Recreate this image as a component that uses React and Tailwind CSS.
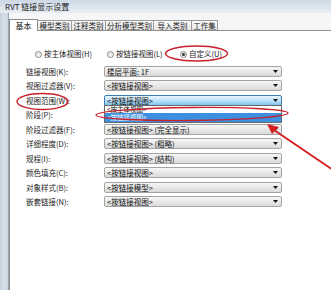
import React from "react";

const FONT = { fontFamily: '"Noto Sans CJK SC", "Liberation Sans", sans-serif' };

function Arrow() {
  return (
    <svg width="5" height="3" viewBox="0 0 5 3" className="block">
      <path d="M0 0H5L2.5 3Z" fill="#111" />
    </svg>
  );
}

function Select({ text, focused }) {
  return (
    <div
      className={
        focused
          ? "flex h-[11px] w-[178px] items-center rounded-[2px] border border-[#3c7fb1] bg-gradient-to-b from-[#eaf6fd] via-[#bfe3f8] to-[#7cc4ee] pl-[2px] text-[7.5px] leading-none text-[#111]"
          : "flex h-[11px] w-[178px] items-center rounded-[2px] border border-[#a4a4a4] bg-gradient-to-b from-[#f7f7f7] to-[#dadada] pl-[2px] text-[7.5px] leading-none text-[#111]"
      }
    >
      <span className="whitespace-nowrap">{text}</span>
      <span className="ml-auto mr-[3px]">
        <Arrow />
      </span>
    </div>
  );
}

function Row({ label, value, focused, hidden }) {
  return (
    <div className="flex h-[14.5px] items-center">
      <div className="w-[78px] whitespace-nowrap text-[7.5px] leading-none text-[#222]">{label}</div>
      {hidden ? <div className="h-[11px] w-[178px]" /> : <Select text={value} focused={focused} />}
    </div>
  );
}

function Radio({ checked }) {
  return (
    <span className="flex h-[7px] w-[7px] items-center justify-center rounded-full border border-[#8a8a8a] bg-gradient-to-b from-[#e6e6e6] to-[#fafafa]">
      {checked && <span className="h-[3px] w-[3px] rounded-full bg-[#333]" />}
    </span>
  );
}

const tabs = [
  { t: "模型类别", w: "w-[34px]" },
  { t: "注释类别", w: "w-[34px]" },
  { t: "分析模型类别", w: "w-[48px]" },
  { t: "导入类别", w: "w-[38px]" },
  { t: "工作集", w: "w-[26px]" },
];

export default function App() {
  return (
    <div className="relative h-[290px] w-[331px] overflow-hidden bg-white" style={FONT}>
      {/* title bar */}
      <div className="flex h-[13px] items-center bg-gradient-to-b from-[#cdd9e6] to-[#e8edf2] pl-[5px] text-[8px] leading-none text-[#1a1a1a]">
        RVT 链接显示设置
      </div>
      <div className="flex h-[277px]">
        {/* left window frame */}
        <div className="w-[9px] border-r border-[#9aa6b2] bg-gradient-to-r from-[#c3cfdb] via-[#d8e1ea] to-[#c9d4df]" />
        <div className="flex flex-1 flex-col bg-white">
          <div className="h-[5px] bg-[#f4f6f8]" />
          {/* tabs */}
          <div className="flex h-[12px] items-end bg-[#f4f6f8]">
            <div className="relative z-10 -mb-px flex h-[12px] w-[29px] items-center justify-center border border-b-0 border-[#8c8c8c] bg-white text-[8px] leading-none text-[#111]">
              基本
            </div>
            {tabs.map((tb) => (
              <div
                key={tb.t}
                className={`flex h-[10px] ${tb.w} items-center justify-center border border-l-0 border-b-0 border-[#9a9a9a] bg-gradient-to-b from-[#fbfbfb] to-[#e6e6e6] text-[7.5px] leading-none text-[#222] whitespace-nowrap`}
              >
                {tb.t}
              </div>
            ))}
          </div>
          {/* panel */}
          <div className="flex flex-1 flex-col border-l border-t border-[#8c8c8c] bg-white">
            {/* radios */}
            <div className="mt-[18px] flex h-[10px] items-center text-[7.5px] leading-none text-[#222]">
              <div className="ml-[25px] flex w-[72px] items-center gap-[2px]">
                <Radio />
                <span className="whitespace-nowrap">按主体视图(H)</span>
              </div>
              <div className="flex w-[73px] items-center gap-[2px]">
                <Radio />
                <span className="whitespace-nowrap">按链接视图(L)</span>
              </div>
              <div className="flex items-center gap-[2px]">
                <Radio checked />
                <span className="whitespace-nowrap">自定义(U)</span>
              </div>
            </div>
            {/* rows */}
            <div className="mt-[5px] flex flex-col pl-[16px]">
              <Row label="链接视图(K):" value="楼层平面: 1F" />
              <Row label="视图过滤器(V):" value="<按链接视图>" />
              <Row label="视图范围(W):" value="<按链接视图>" focused />
              <Row label="阶段(P):" hidden />
              <Row label="阶段过滤器(F):" value="<按链接视图>  (完全显示)" />
              <Row label="详细程度(D):" value="<按链接视图>  (粗略)" />
              <Row label="规程(I):" value="<按链接视图>  (结构)" />
              <Row label="颜色填充(C):" value="<按链接视图>" />
              <Row label="对象样式(B):" value="<按链接模型>" />
              <Row label="嵌套链接(N):" value="<按链接视图>" />
            </div>
          </div>
        </div>
      </div>

      {/* open dropdown list */}
      <div className="absolute left-[104px] top-[105px] z-20 flex w-[178px] flex-col border border-[#6a6a6a] bg-white text-[6.5px] text-[#111]">
        <div className="flex h-[7px] items-center pl-[2px] leading-none">&lt;按主体视图&gt;</div>
        <div className="flex h-[9px] items-center bg-[#3d8fe0] pl-[2px] leading-none text-white">&lt;按链接视图&gt;</div>
      </div>

      {/* red annotations */}
      <svg className="pointer-events-none absolute left-0 top-0 z-30" width="331" height="290" viewBox="0 0 331 290">
        <ellipse cx="196.5" cy="53.5" rx="31" ry="7.5" fill="none" stroke="#c8202a" strokeWidth="1.4" />
        <ellipse cx="42.5" cy="101.5" rx="25.5" ry="8" fill="none" stroke="#c8202a" strokeWidth="1.4" />
        <ellipse cx="192" cy="114" rx="96" ry="6.5" fill="none" stroke="#c8202a" strokeWidth="1.4" transform="rotate(-0.6 192 114)" />
        <line x1="274" y1="130" x2="333" y2="170" stroke="#d42020" strokeWidth="2" />
        <path d="M267 124 L279 127 L272 134 Z" fill="#d42020" />
      </svg>
    </div>
  );
}
